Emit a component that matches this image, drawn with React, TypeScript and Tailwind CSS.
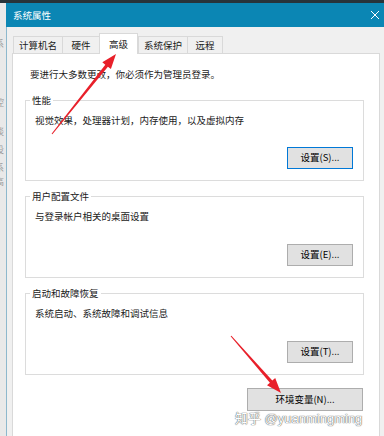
import React from 'react'

const tabs = [
  { label: '计算机名', w: 'w-[49px]', active: false },
  { label: '硬件', w: 'w-[37px]', active: false },
  { label: '高级', w: 'w-[39px]', active: true },
  { label: '系统保护', w: 'w-[49px]', active: false },
  { label: '远程', w: 'w-[36px]', active: false },
]

function Btn({ label, focus, w }: { label: string; focus?: boolean; w: string }) {
  return (
    <button
      className={`${w} h-[22px] bg-[#e1e1e1] border text-[9.5px] leading-none text-black ${
        focus ? 'border-[#0078d7]' : 'border-[#adadad]'
      }`}
    >
      {label}
    </button>
  )
}

function Group({ title, desc, btn, focus, h, mt }: { title: string; desc: string; btn: string; focus?: boolean; h: string; mt: string }) {
  return (
    <fieldset className={`border border-[#dcdcdc] px-[4px] ${mt}`}>
      <legend className="px-[2px] leading-[14px]">{title}</legend>
      <div className={`flex flex-col ${h} pl-[5px] pr-[6px]`}>
        <div className="pt-[6px] leading-[14px]">{desc}</div>
        <div className="mt-auto mb-[11px] self-end">
          <Btn label={btn} focus={focus} w="w-[66px]" />
        </div>
      </div>
    </fieldset>
  )
}

export default function App() {
  return (
    <div className="relative w-[384px] h-[436px] overflow-hidden flex flex-col bg-[#f0f0f0] text-[9.5px] text-[#1a1a1a] font-['Noto_Sans_CJK_SC','Microsoft_YaHei',sans-serif]">
      <div className="h-[3px] bg-[#27343b] shrink-0" />
      <div className="flex flex-1 min-h-0">
        {/* window behind, mostly hidden */}
        <div className="w-[6px] shrink-0 bg-[#e9e9e9] overflow-hidden text-[#9a9a9a] text-[9px] leading-[10px]">
          <div className="-ml-[5px] flex flex-col">
            <span className="mt-[36px]">系</span>
            <span className="mt-[49px]">控</span>
            <span className="mt-[19px]">谈</span>
            <span className="mt-[8px]">设</span>
            <span className="mt-[8px]">系</span>
            <span className="mt-[4px]">高</span>
          </div>
        </div>

        <div className="flex-1 flex flex-col min-w-0">
          <div className="h-[24px] shrink-0 bg-[#0b86b4] flex items-center justify-between pl-[7px] pr-[3px] text-white">
            <span className="text-[9.5px]">系统属性</span>
            <svg width="10" height="10" viewBox="0 0 10 10" className="mr-[1px]">
              <path d="M1 1 L9 9 M9 1 L1 9" stroke="#fff" strokeWidth="1" />
            </svg>
          </div>

          <div className="flex-1 flex flex-col border-l border-[#8db8cd] pl-[5px] pr-[4px] pt-[6px] min-h-0">
            <div className="flex items-end h-[20px] pl-[1px]">
              {tabs.map((t, i) => (
                <div
                  key={t.label}
                  className={`${t.w} flex items-center justify-center ${
                    t.active
                      ? 'h-[21px] -mb-px bg-white border border-b-0 border-[#d9d9d9] relative z-10'
                      : `h-[17px] border-t border-l border-[#d9d9d9] ${i === tabs.length - 1 ? 'border-r' : ''}`
                  }`}
                >
                  {t.label}
                </div>
              ))}
            </div>

            <div className="flex-1 bg-white border-t border-l border-r border-[#d9d9d9] pt-[13px] pl-[12px] pr-[15px]">
              <div className="pl-[5px] leading-[14px]">要进行大多数更改，你必须作为管理员登录。</div>

              <Group title="性能" desc="视觉效果，处理器计划，内存使用，以及虚拟内存" btn="设置(S)..." focus h="h-[73px]" mt="mt-[12px]" />
              <Group title="用户配置文件" desc="与登录帐户相关的桌面设置" btn="设置(E)..." h="h-[74px]" mt="mt-[8px]" />
              <Group title="启动和故障恢复" desc="系统启动、系统故障和调试信息" btn="设置(T)..." h="h-[74px]" mt="mt-[8px]" />

              <div className="flex justify-end mt-[13px] pr-[1px]">
                <button className="w-[116px] h-[23px] bg-[#e1e1e1] border border-[#adadad] text-[9.5px] leading-none text-black">
                  环境变量(N)...
                </button>
              </div>
            </div>
          </div>
        </div>
      </div>

      {/* annotation arrows */}
      <svg className="absolute left-0 top-0 pointer-events-none" width="384" height="436">
        <polygon
          fill="#e8202a"
          points="52.4,134.3 107.9,66.7 110.9,69.1 116,54 102.3,62.3 105.3,64.7 51.6,133.7"
        />
        <polygon
          fill="#e8202a"
          points="230.6,336.3 269.9,382.8 267,385.3 281,393 275.2,378.1 272.3,380.6 231.4,335.7"
        />
      </svg>

      {/* watermark */}
      <div className="absolute left-[235px] top-[411px] text-[13px] leading-[15px] text-white font-['Liberation_Sans','Noto_Sans_CJK_SC',sans-serif] [text-shadow:0_0_1px_#555,0_0_1px_#555]">
        知乎 @yuanmingming
      </div>
    </div>
  )
}
